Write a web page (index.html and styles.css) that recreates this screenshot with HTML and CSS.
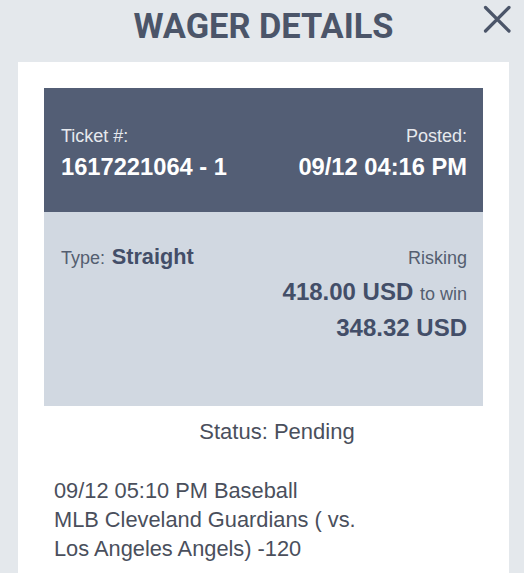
FILE: index.html
```html
<!DOCTYPE html>
<html>
  <head>
    <title>Wager Details</title>
    <link rel="stylesheet" href="styles.css">
  </head>
  <body>
    <div class="modal">
      <div class="modal-header">
        <h1>WAGER DETAILS</h1>
        <button class="close-btn" aria-label="Close">
          <svg width="28" height="28" viewBox="0 0 28 28">
            <path d="M2.5 2.5 L26 26 M26 2.5 L2.5 26" stroke="#4b5569" stroke-width="3.2" stroke-linecap="round" fill="none" />
          </svg>
        </button>
      </div>

      <div class="card">
        <div class="ticket-head">
          <div class="col">
            <span class="label">Ticket #:</span>
            <span class="value">1617221064 - 1</span>
          </div>
          <div class="col right">
            <span class="label">Posted:</span>
            <span class="value">09/12 04:16 PM</span>
          </div>
        </div>

        <div class="ticket-body">
          <div class="type"><span class="small">Type:</span> <b class="type-name">Straight</b></div>
          <div class="amounts">
            <div><span class="small">Risking</span></div>
            <div><b>418.00 USD</b> <span class="small">to win</span></div>
            <div><b>348.32 USD</b></div>
          </div>
        </div>

        <p class="status">Status: Pending</p>

        <p class="event">09/12 05:10 PM Baseball<br>MLB Cleveland Guardians ( vs.<br>Los Angeles Angels) -120</p>
      </div>
    </div>
  </body>
</html>
```

FILE: styles.css
```css
body {
  margin: 0;
  background-color: #e4e8ec;
  font-family: "Liberation Sans", Arial, sans-serif;
  color: #4b5569;
  overflow: hidden;
}

.modal {
  height: 100vh;
  display: flex;
  flex-direction: column;
  padding: 0 15px 0 18px;
}

.modal-header {
  position: relative;
  height: 62px;
  flex-shrink: 0;
  display: flex;
  justify-content: center;
  align-items: flex-start;
}

.modal-header h1 {
  margin: 0;
  padding-top: 5px;
  font-family: Roboto, sans-serif;
  font-size: 34.4px;
  font-weight: 700;
  line-height: 42px;
}

.close-btn {
  position: absolute;
  right: -2px;
  top: 5px;
  background: none;
  border: none;
  padding: 0;
  cursor: pointer;
}

.card {
  flex: 1;
  background-color: #fff;
  padding: 26px 26px 0 26px;
  overflow: hidden;
}

.ticket-head {
  background-color: #535e75;
  color: #fff;
  display: flex;
  justify-content: space-between;
  padding: 37px 16px 31px 17px;
}

.col {
  display: flex;
  flex-direction: column;
  gap: 6px;
}

.col.right {
  align-items: flex-end;
}

.label {
  font-size: 18px;
  line-height: 22px;
  color: #e6e9ee;
}

.value {
  font-size: 23.7px;
  font-weight: 700;
  line-height: 28px;
}

.ticket-body {
  background-color: #d1d8e1;
  display: flex;
  justify-content: space-between;
  padding: 27px 16px 61px 17px;
  font-size: 24px;
  line-height: 34px;
  color: #434e68;
}

.ticket-body b {
  font-weight: 700;
}

.type-name {
  font-size: 21.7px;
}

.small {
  font-size: 18px;
  color: #545e70;
}

.amounts {
  display: flex;
  flex-direction: column;
  align-items: flex-end;
}

.status {
  margin: 11px 0 0 0;
  text-align: center;
  font-size: 22px;
  line-height: 30px;
  color: #4a4f5c;
  padding-left: 27px;
}

.event {
  margin: 29px 0 0 10px;
  font-size: 21.8px;
  line-height: 29px;
  color: #4a4f5c;
}
```
